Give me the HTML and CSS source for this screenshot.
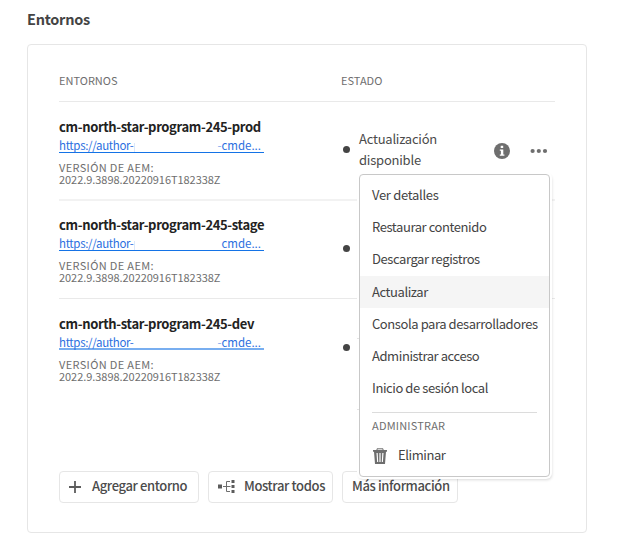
FILE: index.html
```html
<!DOCTYPE html>
<html lang="es">
<head>
<meta charset="utf-8">
<title>Entornos</title>
<link rel="stylesheet" href="styles.css">
</head>
<body>
<h1 class="title"><span>Entornos</span></h1>
<section class="card">
  <div class="row head"><span class="label">ENTORNOS</span><span class="label">ESTADO</span></div>
  <div class="row env first">
    <div class="info">
      <div class="name">cm-north-star-program-245-prod</div>
      <a class="link"><span class="url">https://author-</span><i class="cut"></i><span class="tail"><span class="dash">-</span>cmde...</span></a>
      <div class="version">VERSIÓN DE AEM:</div>
      <div class="number">2022.9.3898.20220916T182338Z</div>
    </div>
    <div class="status">
      <i class="dot"></i>
      <div class="status-text">Actualización<br>disponible</div>
      <svg class="info-icon" viewBox="0 0 16 16"><circle cx="8" cy="8" r="8"/><path d="M6.700 2.800h2.500v2.300H6.700zM5.800 6.400h3.500v5h1.100v1.400H5.800v-1.400h1.100V7.800H5.800z" fill="#fff"/></svg>
      <svg class="more" viewBox="0 0 18 6"><circle cx="2.600" cy="3" r="2.100"/><circle cx="8.800" cy="3" r="2.100"/><circle cx="15" cy="3" r="2.100"/></svg>
    </div>
  </div>
  <div class="row env second">
    <div class="info">
      <div class="name">cm-north-star-program-245-stage</div>
      <a class="link"><span class="url">https://author-</span><i class="cut"></i><span class="tail">cmde...</span></a>
      <div class="version">VERSIÓN DE AEM:</div>
      <div class="number">2022.9.3898.20220916T182338Z</div>
    </div>
    <div class="status"><i class="dot"></i></div>
  </div>
  <div class="row env last">
    <div class="info">
      <div class="name">cm-north-star-program-245-dev</div>
      <a class="link soft"><span class="url">https://author-</span><span class="tail"><span class="dash">-</span>cmde...</span></a>
      <div class="version">VERSIÓN DE AEM:</div>
      <div class="number">2022.9.3898.20220916T182338Z</div>
    </div>
    <div class="status"><i class="dot"></i></div>
  </div>
  <div class="actions">
    <button class="btn add"><svg class="plus" viewBox="0 0 12 12"><path d="M6 0v12M0 6h12"/></svg><span>Agregar entorno</span></button>
    <button class="btn show"><svg class="tree" viewBox="0 0 17 13"><path class="fill" d="M0 4.500h4v4H0zM13.500 0h3v3h-3zM13.500 5h3v3h-3zM13.500 10h3v3h-3z"/><path class="line" d="M5 6.500h7.500M12 1.500H8.500v10H12"/></svg><span>Mostrar todos</span></button>
    <button class="btn more-info"><span>Más información</span></button>
  </div>
</section>
<div class="menu">
  <div class="item loose">Ver detalles</div>
  <div class="item">Restaurar contenido</div>
  <div class="item">Descargar registros</div>
  <div class="item active">Actualizar</div>
  <div class="item">Consola para desarrolladores</div>
  <div class="item">Administrar acceso</div>
  <div class="item">Inicio de sesión local</div>
  <div class="divider"></div>
  <div class="group">ADMINISTRAR</div>
  <div class="item delete"><svg class="trash" viewBox="0 0 14 16"><path class="rim" d="M4 2V.8h6V2"/><path fill-rule="evenodd" d="M0 2h14v1.800h-1L12 16H2L1 3.800H0zM3.500 5l.6 9h1.100L4.700 5zM6.400 5v9h1.200V5zM9.300 5l-.5 9h1.100l.6-9z"/></svg><span>Eliminar</span></div>
</div>
</body>
</html>
```
FILE: styles.css
```css
* { box-sizing: border-box; }
body {
  margin: 0;
  width: 618px;
  height: 545px;
  overflow: hidden;
  position: relative;
  background: #fff;
  color: #4b4b4b;
  font-family: "Noto Sans CJK SC", "Open Sans", sans-serif;
  font-size: 13px;
  padding: 7px 31px 0 27px;
}
.title { margin: 0 0 13px; font-size: 14.5px; line-height: 24px; font-weight: 700; color: #444; letter-spacing: -.25px; }
.card {
  width: 560px;
  height: 489px;
  border: 1px solid #e6e6e6;
  border-radius: 4px;
  padding: 20px 31px 0;
}
.row { display: flex; border-bottom: 1px solid #e9e9e9; }
.head { height: 37px; }
.label { flex: none; width: 282px; font-size: 11px; line-height: 31px; color: #6e6e6e; }
.label + .label { width: 214px; }
.env { height: 98px; }
.env.first { height: 99px; border-bottom: 2px solid #f2f2f2; }
.env.last { border-bottom: 0; height: 172px; }
.info { flex: none; width: 282px; padding-top: 15px; }
.second .info { padding-top: 14px; }
.name { font-size: 13px; line-height: 20px; font-weight: 700; color: #222; white-space: nowrap; letter-spacing: -.35px; }
.link {
  display: flex;
  width: 205px;
  height: 16px;
  line-height: 17px;
  font-size: 11.5px;
  letter-spacing: -.35px;
  color: #2b6fe0;
  border-bottom: 1px solid #1473e6;
  white-space: nowrap;
}
.link.soft { border-bottom: 2px solid #78aef0; }
.cut { width: 1px; height: 9px; margin: 6px 0 0 1px; background: #dbe7fb; }
.tail { margin-left: auto; padding-right: 3px; letter-spacing: 0; }
.dash { opacity: .6; }
.version { margin-top: 8px; font-size: 11px; line-height: 12px; color: #6e6e6e; white-space: nowrap; letter-spacing: .35px; }
.number { font-size: 11px; line-height: 12px; color: #6e6e6e; white-space: nowrap; letter-spacing: -.05px; }
.status { display: flex; flex: none; width: 214px; height: 94px; align-items: center; }
.last .status { height: 96px; }
.dot { flex: none; width: 7px; height: 7px; margin-left: 2px; border-radius: 50%; background: #444; }
.status-text { margin: -1px 0 0 9px; width: 135px; font-size: 13px; line-height: 21px; letter-spacing: -.22px; }
.info-icon { width: 16px; height: 16px; fill: #6e6e6e; margin-top: 4px; }
.more { width: 18px; height: 6px; margin: 4px 0 0 20px; fill: #6e6e6e; }
.actions { display: flex; gap: 9px; }
.btn {
  display: flex;
  align-items: center;
  height: 32px;
  padding: 0 9px 1px;
  border: 1px solid #e6e6e6;
  border-radius: 4px;
  background: #fff;
  color: #4b4b4b;
  font: 500 13px/20px "Noto Sans CJK SC", "Open Sans", sans-serif;
  letter-spacing: -.37px;
  white-space: nowrap;
}
.btn span { margin-top: -1px; }
.add { width: 140px; }
.show { width: 125px; }
.more-info { width: 116px; }
.plus { flex: none; width: 12px; height: 12px; margin-right: 11px; stroke: #5c5c5c; stroke-width: 1.8; }
.tree { flex: none; width: 17px; height: 13px; margin-right: 9px; }
.tree .fill { fill: #5c5c5c; }
.tree .line { fill: none; stroke: #6e6e6e; stroke-width: 1; }
.menu {
  position: absolute;
  left: 359px;
  top: 174px;
  width: 191px;
  height: 303px;
  padding-top: 4px;
  border: 1px solid #c8c8c8;
  border-radius: 4px;
  background: #fff;
  box-shadow: 0 0 0 2px #fff, 1px 2px 3px 1px rgba(0, 0, 0, .15);
}
.menu::before {
  content: "";
  position: absolute;
  left: -3px;
  top: 163px;
  width: 2px;
  height: 70px;
  border: solid #e4e4e4;
  border-width: 1px 0;
}
.item { display: flex; align-items: center; height: 32px; padding: 0 0 1px 12px; font-size: 13px; line-height: 20px; letter-spacing: -.42px; color: #444; white-space: nowrap; }
.loose { letter-spacing: -.3px; }
.active { height: 33px; border-top: 1px solid #fff; background: #f5f5f5; background-clip: padding-box; }
.divider { height: 1px; margin: 8px 12px 0; background: #dcdcdc; }
.group { padding-left: 12px; font-size: 11px; line-height: 25px; height: 26px; color: #6e6e6e; letter-spacing: .2px; }
.trash { width: 14px; height: 16px; margin: 2px 11px 0 1px; fill: #6e6e6e; }
.trash .rim { fill: none; stroke: #6e6e6e; }
```
